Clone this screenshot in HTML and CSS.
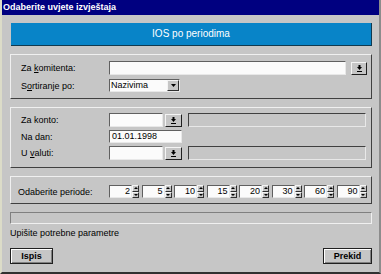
FILE: index.html
```html
<!DOCTYPE html>
<html>

<head>
    <meta charset="UTF-8">
    <title>Odaberite uvjete izvještaja</title>
    <link rel="stylesheet" href="styles.css">
</head>

<body>
    <div class="window">
        <div class="titlebar">Odaberite uvjete izvještaja</div>

        <div class="content">
            <div class="banner">IOS po periodima</div>

            <div class="group group-client">
                <div class="row row-tall">
                    <span class="label">Za <u>k</u>omitenta:</span>
                    <div class="field field-client"></div>
                    <div class="pick pick-client">
                        <svg width="5" height="7" viewBox="0 0 5 7"><rect x="1.5" y="0" width="2" height="2" fill="#000"/><path d="M0 2h5L2.5 5z" fill="#000"/><rect x="0" y="6" width="5" height="1" fill="#000"/></svg>
                    </div>
                </div>
                <div class="row row-short">
                    <span class="label">S<u>o</u>rtiranje po:</span>
                    <div class="combo">
                        <span class="combo-text">Nazivima</span>
                        <span class="combo-btn">
                            <svg width="5" height="3" viewBox="0 0 5 3"><path d="M0 0h5L2.5 3z" fill="#000"/></svg>
                        </span>
                    </div>
                </div>
            </div>

            <div class="group group-account">
                <div class="row row-tall">
                    <span class="label">Za konto:</span>
                    <div class="field field-small"></div>
                    <div class="pick pick-small">
                        <svg width="5" height="7" viewBox="0 0 5 7"><rect x="1.5" y="0" width="2" height="2" fill="#000"/><path d="M0 2h5L2.5 5z" fill="#000"/><rect x="0" y="6" width="5" height="1" fill="#000"/></svg>
                    </div>
                    <div class="readout"></div>
                </div>
                <div class="row row-short">
                    <span class="label">Na dan:</span>
                    <div class="field field-date">01.01.1998</div>
                </div>
                <div class="row row-tall">
                    <span class="label">U <u>v</u>aluti:</span>
                    <div class="field field-small"></div>
                    <div class="pick pick-small">
                        <svg width="5" height="7" viewBox="0 0 5 7"><rect x="1.5" y="0" width="2" height="2" fill="#000"/><path d="M0 2h5L2.5 5z" fill="#000"/><rect x="0" y="6" width="5" height="1" fill="#000"/></svg>
                    </div>
                    <div class="readout"></div>
                </div>
            </div>

            <div class="group group-periods">
                <div class="row row-short">
                    <span class="label label-periods">Odaberite periode:</span>
                    <div class="spins">
                        <div class="spin"><span class="spin-val">2</span><span class="spin-arrows"><span class="spin-up"></span><span class="spin-down"></span></span></div>
                        <div class="spin"><span class="spin-val">5</span><span class="spin-arrows"><span class="spin-up"></span><span class="spin-down"></span></span></div>
                        <div class="spin"><span class="spin-val">10</span><span class="spin-arrows"><span class="spin-up"></span><span class="spin-down"></span></span></div>
                        <div class="spin"><span class="spin-val">15</span><span class="spin-arrows"><span class="spin-up"></span><span class="spin-down"></span></span></div>
                        <div class="spin"><span class="spin-val">20</span><span class="spin-arrows"><span class="spin-up"></span><span class="spin-down"></span></span></div>
                        <div class="spin"><span class="spin-val">30</span><span class="spin-arrows"><span class="spin-up"></span><span class="spin-down"></span></span></div>
                        <div class="spin"><span class="spin-val">60</span><span class="spin-arrows"><span class="spin-up"></span><span class="spin-down"></span></span></div>
                        <div class="spin"><span class="spin-val">90</span><span class="spin-arrows"><span class="spin-up"></span><span class="spin-down"></span></span></div>
                    </div>
                </div>
            </div>

            <div class="status"></div>

            <div class="message">Upišite potrebne parametre</div>

            <div class="buttons">
                <div class="button button-print">Ispis</div>
                <div class="button button-cancel">Prekid</div>
            </div>
        </div>
    </div>
</body>

</html>
```

FILE: styles.css
```css
* {
    box-sizing: border-box;
}

body {
    margin: 0;
    font-family: "Liberation Sans", Arial, sans-serif;
    font-size: 9px;
    color: #000;
}

.window {
    width: 381px;
    height: 274px;
    background-color: #c6c6c6;
    border-left: 2px solid #dcdcc8;
    border-right: 2px solid #8c8c8c;
    border-bottom: 2px solid #303030;
    display: flex;
    flex-direction: column;
}

.titlebar {
    height: 15px;
    line-height: 15px;
    padding-left: 1px;
    background-color: #000080;
    color: #fff;
    font-weight: bold;
}

.content {
    flex: 1;
    display: flex;
    flex-direction: column;
    padding: 8px 7px 0 8px;
}

.banner {
    margin-left: 1px;
    height: 23px;
    line-height: 22px;
    background-color: #0884c8;
    color: #fff;
    font-size: 10px;
    text-align: center;
    border-right: 1px solid #103a50;
    border-bottom: 1px solid #103a50;
}

/* raised panels */
.group {
    margin-top: 8px;
    display: flex;
    flex-direction: column;
    border: 1px solid;
    border-color: #f0f0f0 #404040 #404040 #f0f0f0;
    padding-left: 10px;
}

.group-client {
    padding-top: 6px;
    padding-bottom: 6px;
    gap: 4px;
}

.group-account {
    padding-top: 5px;
    padding-bottom: 7px;
    gap: 3px;
}

.group-periods {
    padding: 8px 0 5px 7px;
}

.row {
    display: flex;
    align-items: center;
}

.row-tall {
    height: 14px;
}

.row-short {
    height: 13px;
}

.label {
    width: 88px;
    flex-shrink: 0;
}

.label-periods {
    width: 91px;
}

/* sunken white fields */
.field {
    height: 100%;
    background-color: #fbfbfb;
    border: 1px solid;
    border-color: #606060 #e8e8e8 #e8e8e8 #606060;
    padding-left: 2px;
    line-height: 11px;
}

.field-client {
    width: 237px;
}

.field-small {
    width: 54px;
}

.field-date {
    width: 73px;
}

.pick {
    height: 13px;
    display: flex;
    align-items: center;
    justify-content: center;
    border: 1px solid;
    border-color: #f4f4f4 #202020 #202020 #f4f4f4;
    align-self: flex-end;
}

.pick-client {
    width: 16px;
    margin-left: 5px;
}

.pick-small {
    width: 17px;
    margin-left: 2px;
}

.readout {
    width: 178px;
    height: 100%;
    margin-left: 6px;
    border: 1px solid;
    border-color: #404040 #e8e8e8 #e8e8e8 #404040;
}

.combo {
    width: 71px;
    height: 100%;
    display: flex;
    background-color: #fbfbfb;
    border: 1px solid;
    border-color: #606060 #e8e8e8 #e8e8e8 #606060;
}

.combo-text {
    flex: 1;
    padding-left: 1px;
    line-height: 11px;
}

.combo-btn {
    width: 12px;
    display: flex;
    align-items: center;
    justify-content: center;
    background-color: #c6c6c6;
    border: 1px solid;
    border-color: #f4f4f4 #303030 #303030 #f4f4f4;
}

.spins {
    display: flex;
    gap: 2.5px;
    height: 100%;
}

.spin {
    width: 30px;
    height: 100%;
    display: flex;
}

.spin-val {
    flex: 1;
    background-color: #fbfbfb;
    border: 1px solid;
    border-color: #606060 #e8e8e8 #e8e8e8 #606060;
    text-align: right;
    padding-right: 1px;
    line-height: 11px;
}

.spin-arrows {
    width: 7px;
    display: flex;
    flex-direction: column;
}

.spin-up,
.spin-down {
    flex: 1;
    display: flex;
    align-items: center;
    justify-content: center;
    border: 1px solid;
    border-color: #f4f4f4 #303030 #303030 #f4f4f4;
}

.spin-up::after {
    content: "";
    border-left: 2px solid transparent;
    border-right: 2px solid transparent;
    border-bottom: 2px solid #000;
}

.spin-down::after {
    content: "";
    border-left: 2px solid transparent;
    border-right: 2px solid transparent;
    border-top: 2px solid #000;
}

.status {
    margin-top: 8px;
    height: 12px;
    border: 1px solid;
    border-color: #808080 #f0f0f0 #f0f0f0 #808080;
}

.message {
    margin-top: 4px;
    line-height: 10px;
}

.buttons {
    margin-top: 10px;
    display: flex;
    justify-content: space-between;
}

.button {
    height: 16px;
    line-height: 14px;
    text-align: center;
    font-weight: bold;
    border: 1px solid #202020;
    box-shadow: inset 1px 1px 0 #fff, inset -1px -1px 0 #808080;
}

.button-print {
    width: 43px;
}

.button-cancel {
    width: 49px;
}
```
